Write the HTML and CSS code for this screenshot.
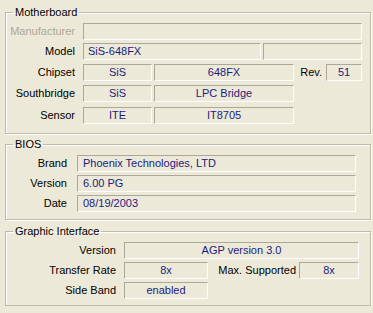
FILE: index.html
```html
<!DOCTYPE html>
<html>
<head>
<meta charset="utf-8">
<link rel="stylesheet" href="styles.css">
</head>
<body>
<div class="panel">
  <fieldset class="grp mb">
    <legend>Motherboard</legend>
    <div class="row">
      <span class="lbl dis">Manufacturer</span>
      <span class="f w279"></span>
    </div>
    <div class="row g3">
      <span class="lbl">Model</span>
      <span class="f w178 val">SiS-648FX</span>
      <span class="f w99 ml2"></span>
    </div>
    <div class="row g4">
      <span class="lbl">Chipset</span>
      <span class="f w69 val c">SiS</span>
      <span class="f w140 ml2 val c">648FX</span>
      <span class="rev">Rev.</span>
      <span class="f w36 val c">51</span>
    </div>
    <div class="row g4">
      <span class="lbl">Southbridge</span>
      <span class="f w69 val c">SiS</span>
      <span class="f w140 ml2 val c">LPC Bridge</span>
    </div>
    <div class="row g5">
      <span class="lbl">Sensor</span>
      <span class="f w69 val c">ITE</span>
      <span class="f w140 ml2 val c">IT8705</span>
    </div>
  </fieldset>

  <fieldset class="grp bios">
    <legend>BIOS</legend>
    <div class="row">
      <span class="lbl">Brand</span>
      <span class="f wb val">Phoenix Technologies, LTD</span>
    </div>
    <div class="row g3">
      <span class="lbl">Version</span>
      <span class="f wb val">6.00 PG</span>
    </div>
    <div class="row g3">
      <span class="lbl">Date</span>
      <span class="f wb val">08/19/2003</span>
    </div>
  </fieldset>

  <fieldset class="grp gi">
    <legend>Graphic Interface</legend>
    <div class="row">
      <span class="lbl">Version</span>
      <span class="f w235 val c">AGP version 3.0</span>
    </div>
    <div class="row g3">
      <span class="lbl">Transfer Rate</span>
      <span class="f w84 val c">8x</span>
      <span class="maxl">Max. Supported</span>
      <span class="f w60 val c">8x</span>
    </div>
    <div class="row g3">
      <span class="lbl">Side Band</span>
      <span class="f w84 val c">enabled</span>
    </div>
  </fieldset>
</div>
</body>
</html>
```

FILE: styles.css
```css
html, body {
  margin: 0;
  padding: 0;
  background: #ece9d8;
}
body {
  font-family: "Liberation Sans", Arial, sans-serif;
  font-size: 11px;
  line-height: 13px;
  color: #000;
}
.panel {
  padding-left: 5px;
  width: 366px;
}
.grp {
  margin: 0;
  padding: 4px 0 0 0;
  border: 1px solid #bdbaa7;
  box-shadow: inset 1px 1px 0 #fff, 1px 1px 0 #fff;
  min-inline-size: 0;
  width: 366px;
  box-sizing: border-box;
}
.grp legend {
  margin-left: 7px;
  padding: 0 2px;
  line-height: 13px;
}
.mb { margin-top: 6px; padding-bottom: 9px; }
.bios { margin-top: 4px; padding-bottom: 7px; }
.gi { margin-top: 5px; padding-bottom: 6px; }

.row {
  display: flex;
  align-items: center;
  height: 17px;
}
.g3 { margin-top: 3px; }
.g4 { margin-top: 4px; }
.g5 { margin-top: 5px; }

.lbl {
  text-align: right;
  white-space: nowrap;
  flex: none;
}
.mb .lbl { width: 69px; margin-right: 8px; }
.bios .lbl { width: 61px; margin-right: 10px; }
.gi .lbl { width: 110px; margin-right: 8px; }
.dis { color: #aca899; }

.f {
  box-sizing: border-box;
  height: 17px;
  border: 1px solid;
  border-color: #aca899 #fff #fff #aca899;
  display: flex;
  align-items: center;
  padding: 0 4px;
  white-space: nowrap;
  overflow: hidden;
  flex: none;
}
.val { color: #1c1c80; }
.c { justify-content: center; }
.ml2 { margin-left: 2px; }

.w279 { width: 279px; }
.w178 { width: 178px; }
.w99 { width: 99px; }
.w69 { width: 69px; }
.w140 { width: 140px; }
.w36 { width: 36px; }
.wb { width: 279px; padding-left: 5px; }
.w235 { width: 235px; }
.w84 { width: 84px; }
.w60 { width: 60px; }

.rev {
  width: 32px;
  text-align: right;
  padding-right: 4px;
  box-sizing: border-box;
}
.maxl {
  width: 91px;
  text-align: right;
  padding-right: 3px;
  box-sizing: border-box;
  white-space: nowrap;
}
```
